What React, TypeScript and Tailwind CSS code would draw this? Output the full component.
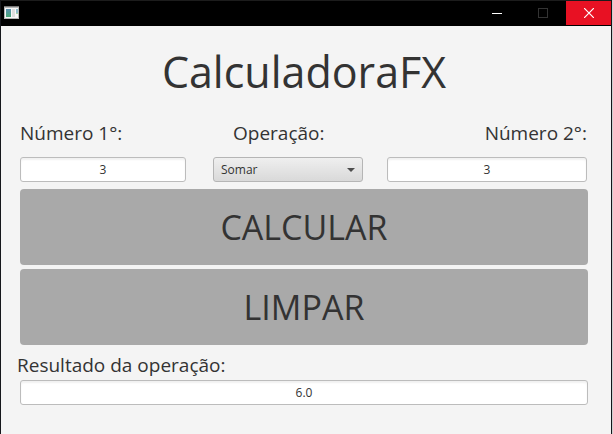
import { useState } from 'react';

const inputStyle =
  'block h-[25px] w-full rounded-[3px] border border-[#bcbcbc] bg-white text-center text-xs text-[#333] shadow-[inset_0_2px_2px_#f1f1f1] outline-none';
const buttonStyle =
  'h-[76px] w-full rounded-[4px] bg-[#a9a9a9] text-[34px] leading-[48px] text-[#333]';
const labelStyle = 'block text-[19px] leading-[28px] whitespace-nowrap';

function TitleBar() {
  return (
    <header className="flex h-[26px] items-start justify-between border-t border-[#1c1c1c] bg-black">
      <svg className="mt-[5px] ml-[3px]" width="15" height="13" viewBox="0 0 15 13" aria-hidden="true">
        <defs>
          <linearGradient id="pane" x1="0" y1="0" x2="0" y2="1">
            <stop offset="0" stopColor="#5b8fb0" />
            <stop offset="1" stopColor="#48a878" />
          </linearGradient>
        </defs>
        <rect width="15" height="13" fill="#b5b5b5" />
        <rect x="1" y="2" width="13" height="10" fill="#f7f7f7" />
        <rect width="15" height="1" fill="#777" />
        <rect x="2" y="3" width="5" height="8" fill="url(#pane)" />
        <rect x="8" y="3" width="3" height="8" fill="#dedede" />
        <rect x="12" y="3" width="2" height="4" fill="#8fbccb" />
        <rect x="12" y="7" width="2" height="1" fill="#a9d6a5" />
      </svg>
      <div className="flex">
        <button aria-label="Minimizar" className="flex h-6 w-[46px] items-center justify-center">
          <svg width="10" height="10" viewBox="0 0 10 10">
            <path d="M0 5.5H10" stroke="#fff" />
          </svg>
        </button>
        <button aria-label="Maximizar" disabled className="flex h-6 w-[46px] items-center justify-center">
          <svg width="10" height="10" viewBox="0 0 10 10">
            <rect x=".5" y=".5" width="9" height="9" fill="none" stroke="#333" />
          </svg>
        </button>
        <button aria-label="Fechar" className="flex h-6 w-[45px] items-center justify-center bg-[#e81123]">
          <svg width="10" height="10" viewBox="0 0 10 10">
            <path d="M0 0L10 10M10 0L0 10" stroke="#fff" strokeWidth="1.2" />
          </svg>
        </button>
      </div>
    </header>
  );
}

export default function App() {
  const [first, setFirst] = useState('3');
  const [second, setSecond] = useState('3');
  const [operation, setOperation] = useState('Somar');
  const [result, setResult] = useState('6.0');

  const calculate = () => {
    const a = Number(first);
    const b = Number(second);
    const value =
      operation === 'Somar' ? a + b : operation === 'Subtrair' ? a - b : operation === 'Multiplicar' ? a * b : a / b;
    setResult(Number.isInteger(value) ? value.toFixed(1) : String(value));
  };

  const clear = () => {
    setFirst('');
    setSecond('');
    setResult('');
  };

  return (
    <div className="min-h-screen bg-[#d0d0d0] pr-px font-['Open_Sans','Noto_Sans',sans-serif] text-[#333]">
      <div className="min-h-screen border-x border-[#15171b] bg-[#f4f4f4]">
        <TitleBar />
        <main className="pr-[23px] pl-[19px]">
          <h1 className="pt-4 text-center text-[43px] leading-[60px]">CalculadoraFX</h1>
          <div className="grid grid-cols-[193fr_174fr_200fr] pt-[17px] pr-px">
            <div className="pr-[27px]">
              <label htmlFor="first" className={labelStyle}>Número 1°:</label>
              <input id="first" className={`${inputStyle} mt-[10px]`} value={first} onChange={(e) => setFirst(e.target.value)} />
            </div>
            <div className="pr-6">
              <label htmlFor="operation" className={`${labelStyle} pl-5`}>Operação:</label>
              <div className="relative mt-[10px]">
                <select
                  id="operation"
                  className="block h-[25px] w-full appearance-none rounded-[3px] border border-[#b5b5b5] bg-linear-to-b from-[#efefef] to-[#d9d9d9] pl-[7px] text-xs text-[#333] outline-none"
                  value={operation}
                  onChange={(e) => setOperation(e.target.value)}
                >
                  <option>Somar</option>
                  <option>Subtrair</option>
                  <option>Multiplicar</option>
                  <option>Dividir</option>
                </select>
                <svg className="pointer-events-none absolute top-[11px] right-2" width="8" height="4" viewBox="0 0 8 4" aria-hidden="true">
                  <path d="M0 0H8L4 4Z" fill="#4d4d4d" />
                </svg>
              </div>
            </div>
            <div>
              <label htmlFor="second" className={`${labelStyle} text-right`}>Número 2°:</label>
              <input id="second" className={`${inputStyle} mt-[10px]`} value={second} onChange={(e) => setSecond(e.target.value)} />
            </div>
          </div>
          <div className="flex flex-col gap-1 pt-[7px]">
            <button className={buttonStyle} onClick={calculate}>CALCULAR</button>
            <button className={buttonStyle} onClick={clear}>LIMPAR</button>
          </div>
          <label htmlFor="result" className={`${labelStyle} -ml-[3px] pt-[6px] pb-px`}>Resultado da operação:</label>
          <input id="result" readOnly className={inputStyle} value={result} />
        </main>
      </div>
    </div>
  );
}
